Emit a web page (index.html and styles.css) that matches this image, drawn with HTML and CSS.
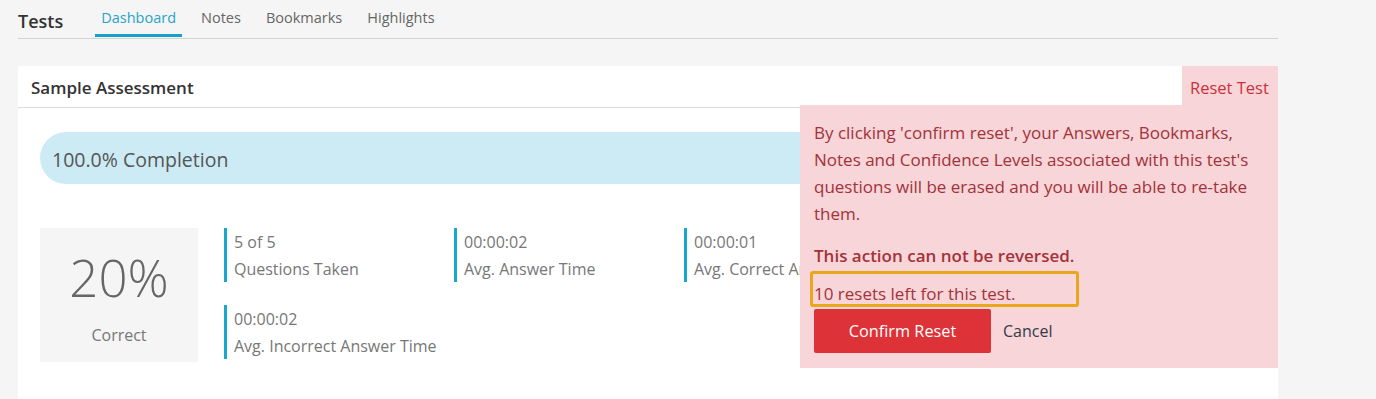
FILE: index.html
```html
<!DOCTYPE html>
<html lang="en">
<head>
    <meta charset="UTF-8">
    <meta name="viewport" content="width=device-width, initial-scale=1.0">
    <title>Tests</title>
    <link rel="stylesheet" href="styles.css">
</head>
<body>
    <div class="page">
        <div class="topbar">
            <h1 class="title">Tests</h1>
            <nav class="tabs">
                <a class="tab active" href="#">Dashboard</a>
                <a class="tab" href="#">Notes</a>
                <a class="tab" href="#">Bookmarks</a>
                <a class="tab" href="#">Highlights</a>
            </nav>
        </div>

        <div class="card">
            <div class="card-head">
                <h2 class="card-title">Sample Assessment</h2>
                <a class="reset-tab" href="#">Reset Test</a>
            </div>
            <div class="card-body">
                <div class="progress">100.0% Completion</div>

                <div class="results">
                    <div class="score">
                        <div class="score-value">20%</div>
                        <div class="score-label">Correct</div>
                    </div>
                    <div class="stats">
                        <div class="stat">
                            <div>5 of 5</div>
                            <div>Questions Taken</div>
                        </div>
                        <div class="stat">
                            <div>00:00:02</div>
                            <div>Avg. Answer Time</div>
                        </div>
                        <div class="stat">
                            <div>00:00:01</div>
                            <div>Avg. Correct Answer Time</div>
                        </div>
                        <div class="stat">
                            <div>00:00:02</div>
                            <div>Avg. Incorrect Answer Time</div>
                        </div>
                    </div>
                </div>
            </div>

            <div class="reset-popup">
                <p>By clicking 'confirm reset', your Answers, Bookmarks, Notes and Confidence Levels associated with this test's questions will be erased and you will be able to re-take them.</p>
                <p class="warning">This action can not be reversed.</p>
                <div class="resets-left">10 resets left for this test.</div>
                <div class="actions">
                    <button class="btn-confirm">Confirm Reset</button>
                    <a class="cancel" href="#">Cancel</a>
                </div>
            </div>
        </div>
    </div>
</body>
</html>
```

FILE: styles.css
```css
body {
    margin: 0;
    background-color: #f5f5f5;
    font-family: "Open Sans", "Liberation Sans", sans-serif;
    color: #555;
}

.page {
    width: 1260px;
    margin-left: 18px;
}

.topbar {
    display: flex;
    height: 38px;
    border-bottom: 1px solid #d4d4d4;
}

.title {
    margin: 0 32px 0 0;
    padding-top: 10px;
    font-size: 18px;
    font-weight: 600;
    color: #333;
    line-height: 22px;
}

.tabs {
    display: flex;
    gap: 13px;
}

.tab {
    padding: 8px 6px 6px 6px;
    font-size: 14.5px;
    line-height: 20px;
    color: #666;
    text-decoration: none;
    border-bottom: 3px solid transparent;
    margin-bottom: 1px;
}

.tab.active {
    color: #27a4c9;
    border-bottom-color: #16a2c8;
}

.card {
    position: relative;
    margin-top: 27px;
    background-color: #fff;
    height: 340px;
}

.card-head {
    display: flex;
    justify-content: space-between;
    height: 41px;
    border-bottom: 1px solid #dcdcdc;
}

.card-title {
    margin: 0;
    padding-left: 13px;
    font-size: 17px;
    font-weight: 600;
    color: #333;
    line-height: 44px;
}

.reset-tab {
    width: 96px;
    box-sizing: border-box;
    padding-left: 8px;
    height: 39px;
    background-color: #f7d5d8;
    color: #c9313b;
    text-decoration: none;
    font-size: 16.5px;
    line-height: 44px;
}

.card-body {
    padding: 24px 22px 0 22px;
}

.progress {
    height: 52px;
    border-radius: 26px;
    background-color: #cdebf4;
    padding-left: 12px;
    font-size: 19.5px;
    line-height: 56px;
    color: #555;
}

.results {
    display: flex;
    align-items: flex-start;
    gap: 26px;
    margin-top: 44px;
}

.score {
    width: 158px;
    height: 134px;
    background-color: #f5f5f5;
    text-align: center;
    flex-shrink: 0;
}

.score-value {
    font-size: 51px;
    font-weight: 300;
    color: #666;
    line-height: 50px;
    padding-top: 24px;
}

.score-label {
    font-size: 16px;
    color: #777;
    margin-top: 22px;
}

.stats {
    display: grid;
    grid-template-columns: repeat(3, 230px);
    row-gap: 23px;
}

.stat {
    border-left: 3px solid #16a8cd;
    padding: 1px 0 0 7px;
    height: 53px;
    font-size: 16px;
    line-height: 27px;
    color: #777;
    white-space: nowrap;
}

.reset-popup {
    position: absolute;
    top: 39px;
    right: 0;
    width: 478px;
    box-sizing: border-box;
    padding: 14px 14px 15px 14px;
    background-color: #f7d5d8;
    color: #a3323a;
    font-size: 17px;
}

.reset-popup p {
    margin: 0;
    line-height: 27px;
}

.reset-popup .warning {
    margin-top: 15px;
    font-weight: 600;
}

.resets-left {
    width: 262px;
    margin: 2px 0 0 -4px;
    padding: 10px 0 0 1px;
    border: 3px solid #e9a71b;
    border-radius: 3px;
    line-height: 20px;
}

.actions {
    display: flex;
    align-items: center;
    gap: 12px;
    margin-top: 2px;
}

.btn-confirm {
    width: 177px;
    height: 44px;
    border: none;
    border-radius: 2px;
    background-color: #dd3237;
    color: #fff;
    font-family: inherit;
    font-size: 16.3px;
    cursor: pointer;
}

.cancel {
    color: #333a4a;
    font-size: 16px;
    text-decoration: none;
}
```
